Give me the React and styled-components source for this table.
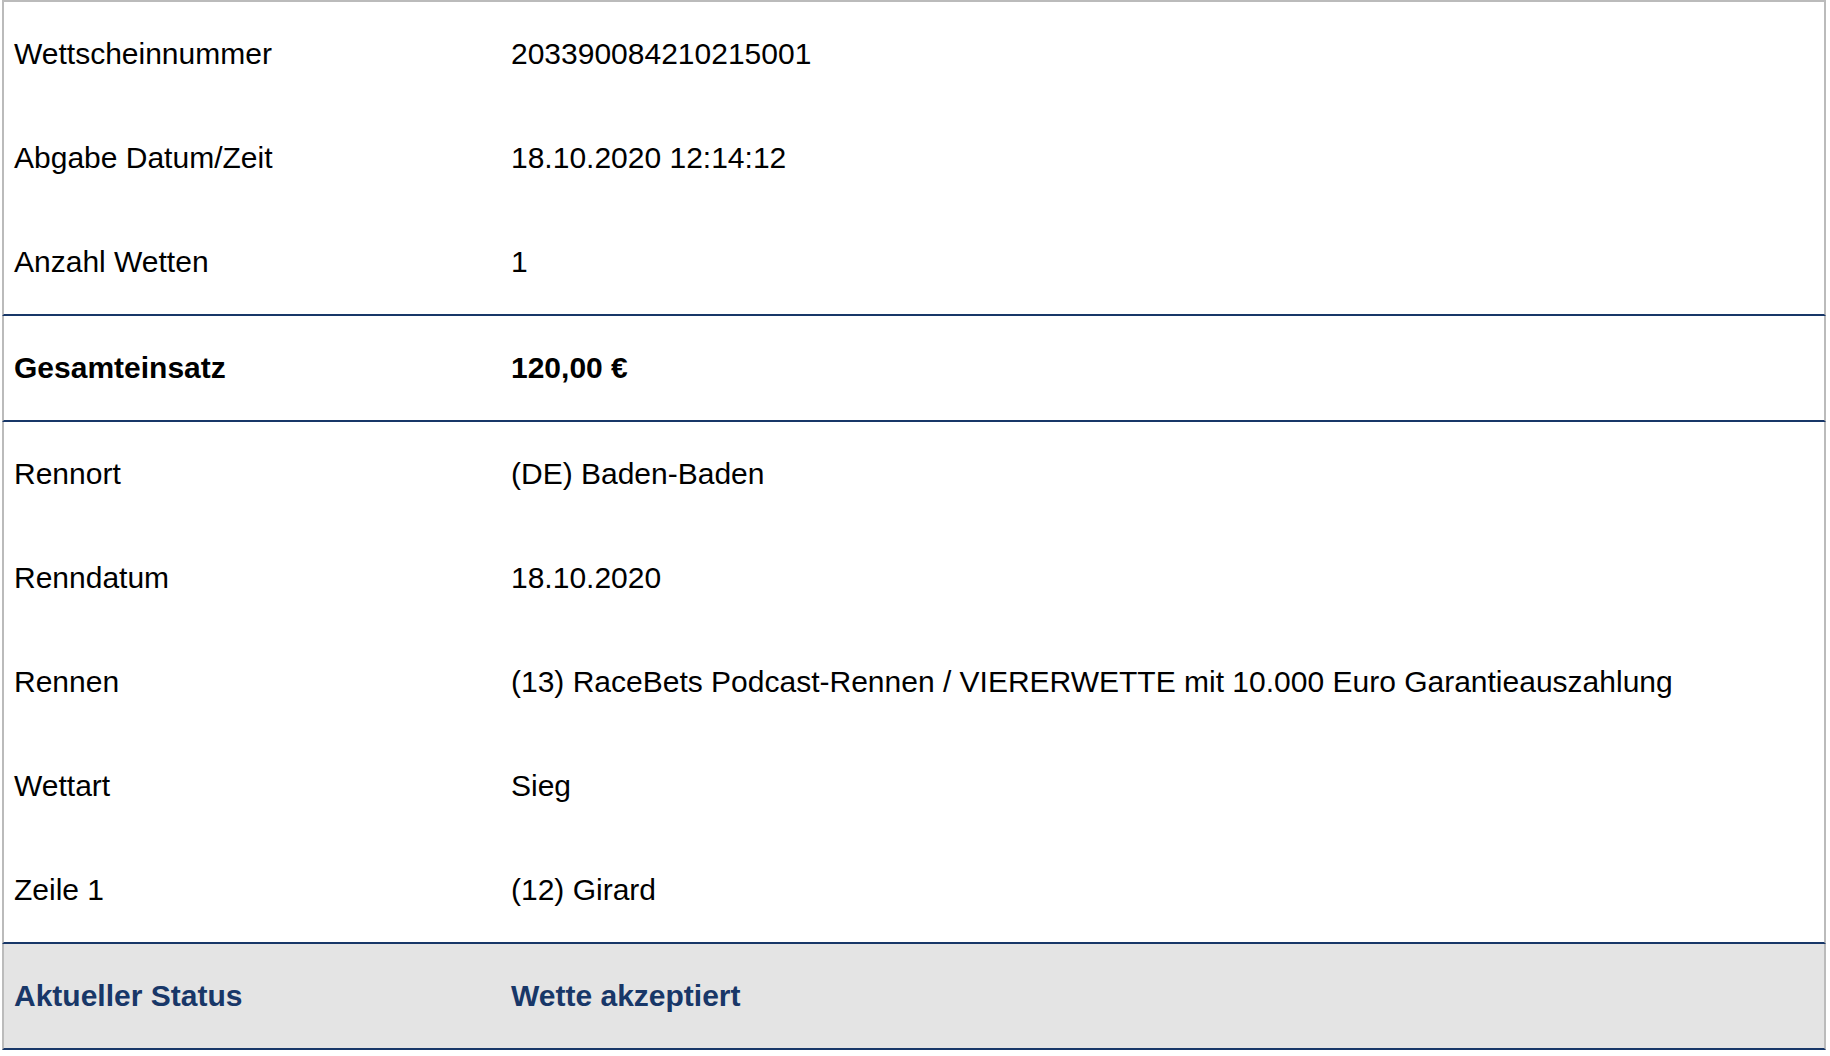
import styled, { createGlobalStyle } from "styled-components";

const GlobalStyle = createGlobalStyle`
  body {
    margin: 0;
    background: #ffffff;
    font-family: "Liberation Sans", Arial, Helvetica, sans-serif;
  }
`;

const rows = [
  { label: "Wettscheinnummer", value: "203390084210215001" },
  { label: "Abgabe Datum/Zeit", value: "18.10.2020 12:14:12" },
  { label: "Anzahl Wetten", value: "1", endsGroup: true },
  { label: "Gesamteinsatz", value: "120,00 €", bold: true, endsGroup: true },
  { label: "Rennort", value: "(DE) Baden-Baden" },
  { label: "Renndatum", value: "18.10.2020" },
  {
    label: "Rennen",
    value:
      "(13) RaceBets Podcast-Rennen / VIERERWETTE mit 10.000 Euro Garantieauszahlung",
  },
  { label: "Wettart", value: "Sieg" },
  { label: "Zeile 1", value: "(12) Girard", endsGroup: true },
  { label: "Aktueller Status", value: "Wette akzeptiert", status: true, endsGroup: true },
];

export default function App() {
  return (
    <>
      <GlobalStyle />
      <Ticket>
        {rows.map((row) => (
          <Row
            key={row.label}
            $bold={row.bold || row.status}
            $status={row.status}
            $line={row.endsGroup}
          >
            <Label>{row.label}</Label>
            <Value>{row.value}</Value>
          </Row>
        ))}
      </Ticket>
    </>
  );
}

const Ticket = styled.div`
  margin-left: 2px;
  width: 1824px;
  border-top: 2px solid #bbbbbb;
  display: flex;
  flex-direction: column;
`;

const Row = styled.div`
  display: grid;
  grid-template-columns: 499px 1fr;
  align-items: center;
  height: 104px;
  border-left: 2px solid #bbbbbb;
  border-right: 2px solid #bbbbbb;
  border-bottom: ${(p) => (p.$line ? "2px solid #183768" : "none")};
  background: ${(p) => (p.$status ? "#e4e4e4" : "#ffffff")};
  color: ${(p) => (p.$status ? "#183768" : "#000000")};
  font-weight: ${(p) => (p.$bold ? 700 : 400)};
  font-size: 30px;
`;

const Label = styled.div`
  padding: 0 8px 0 10px;
  white-space: nowrap;
`;

const Value = styled.div`
  padding: 0 8px;
  white-space: nowrap;
`;
